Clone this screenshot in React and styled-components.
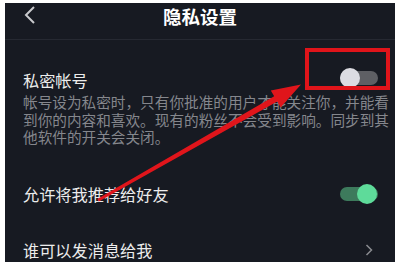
import React from "react";
import styled, { createGlobalStyle } from "styled-components";

const Global = createGlobalStyle`
  html, body { margin: 0; padding: 0; background: #ffffff; }
  body { width: 400px; height: 266px; overflow: hidden; }
`;

const Panel = styled.div`
  position: relative;
  margin: 3px 0 0 5px;
  width: 390px;
  height: 259px;
  background: #171a22;
  display: flex;
  flex-direction: column;
  font-family: "Noto Sans CJK SC", "Noto Sans", sans-serif;
  overflow: hidden;
`;

const Header = styled.div`
  height: 36px;
  display: flex;
  align-items: center;
  justify-content: center;
  position: relative;
  border-bottom: 1px solid #262932;
`;

const BackButton = styled.div`
  position: absolute;
  left: 18px;
  top: 2px;
  width: 14px;
  height: 20px;
`;

const Title = styled.div`
  color: #ffffff;
  font-size: 18.5px;
  font-weight: 700;
  line-height: 22px;
  margin-top: -11px;
`;

const Section = styled.div`
  display: flex;
  flex-direction: column;
  padding: ${(p) => p.$pt}px 17px 0 18px;
`;

const Row = styled.div`
  display: flex;
  align-items: center;
  justify-content: space-between;
  height: 20px;
`;

const Label = styled.div`
  color: #ececec;
  font-size: 16.2px;
  line-height: 20px;
  margin-top: ${(p) => p.$dy || 0}px;
`;

const Desc = styled.div`
  display: flex;
  flex-direction: column;
  margin-top: 5px;
`;

const DescLine = styled.div`
  color: #85878d;
  font-size: 14.65px;
  line-height: 17.5px;
  height: 17.5px;
  white-space: nowrap;
`;

const Track = styled.div`
  position: relative;
  width: 38px;
  height: 14px;
  border-radius: 7px;
  background: ${(p) => (p.$on ? "#3d7a5c" : "#5e5f64")};
`;

const Knob = styled.div`
  position: absolute;
  top: -3px;
  left: ${(p) => (p.$on ? "17px" : "0px")};
  width: 20px;
  height: 20px;
  border-radius: 50%;
  background: ${(p) => (p.$on ? "#5edb9a" : "#dcdce2")};
`;

const Chevron = styled.div`
  width: 8px;
  height: 12px;
  margin-right: 5px;
  display: flex;
`;

const HighlightBox = styled.div`
  position: absolute;
  left: 300px;
  top: 45px;
  width: 85px;
  height: 42px;
  box-sizing: border-box;
  border: 4px solid #e0141a;
`;

const ArrowLayer = styled.svg`
  position: absolute;
  left: 0;
  top: 0;
  pointer-events: none;
`;

export default function App() {
  return (
    <>
      <Global />
      <Panel>
        <Header>
          <BackButton>
            <svg width="14" height="20" viewBox="0 0 14 20">
              <path d="M11 2 L3 10 L11 18" fill="none" stroke="#c9cacd" strokeWidth="2" />
            </svg>
          </BackButton>
          <Title>隐私设置</Title>
        </Header>
        <Section $pt={28}>
          <Row>
            <Label $dy={4}>私密帐号</Label>
            <Track>
              <Knob />
            </Track>
          </Row>
          <Desc>
            <DescLine>帐号设为私密时，只有你批准的用户才能关注你，并能看</DescLine>
            <DescLine>到你的内容和喜欢。现有的粉丝不会受到影响。同步到其</DescLine>
            <DescLine>他软件的开关会关闭。</DescLine>
          </Desc>
        </Section>
        <Section $pt={38}>
          <Row>
            <Label>允许将我推荐给好友</Label>
            <Track $on>
              <Knob $on />
            </Track>
          </Row>
        </Section>
        <Section $pt={36}>
          <Row>
            <Label>谁可以发消息给我</Label>
            <Chevron>
              <svg width="8" height="12" viewBox="0 0 8 12">
                <path d="M1.5 1 L6.5 6 L1.5 11" fill="none" stroke="#8a8b90" strokeWidth="1.5" />
              </svg>
            </Chevron>
          </Row>
        </Section>
        <HighlightBox />
        <ArrowLayer width="390" height="259" viewBox="0 0 390 259">
          <polygon
            points="92.3,195.9 269.2,93.2 265.8,87.5 296,81.5 275.6,104.4 272.3,98.5 93.8,198.5"
            fill="#e0151b"
          />
        </ArrowLayer>
      </Panel>
    </>
  );
}
